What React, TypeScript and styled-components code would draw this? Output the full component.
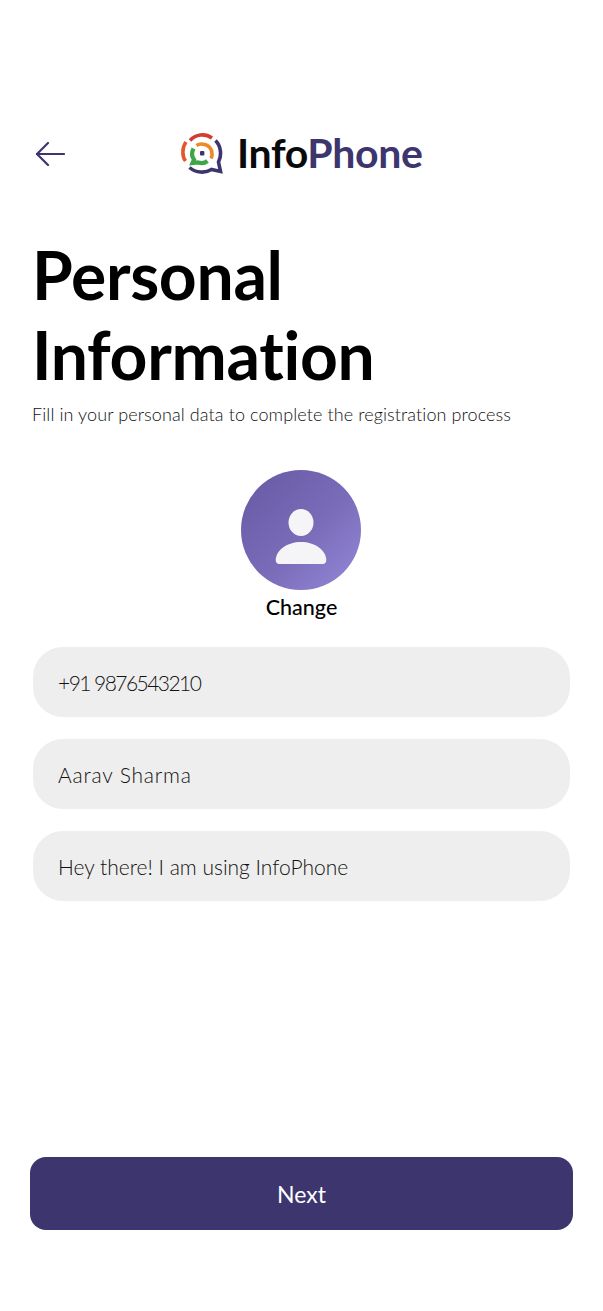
import styled, { createGlobalStyle } from "styled-components";

const GlobalStyle = createGlobalStyle`
  html, body {
    margin: 0;
    padding: 0;
    background: #ffffff;
  }
  * {
    box-sizing: border-box;
  }
`;

const Screen = styled.div`
  width: 603px;
  height: 1311px;
  display: flex;
  flex-direction: column;
  padding: 132px 30px 81px;
  font-family: Lato, "Noto Sans", sans-serif;
  color: #000;
  overflow: hidden;
`;

const Header = styled.header`
  display: flex;
  align-items: center;
  height: 42px;
  padding-left: 5px;
`;

const BackButton = styled.button`
  display: flex;
  padding: 0;
  border: 0;
  background: none;
`;

const Brand = styled.div`
  display: flex;
  align-items: center;
  gap: 14px;
  margin-left: 116px;
`;

const BrandName = styled.div`
  font-size: 41px;
  font-weight: 700;
  letter-spacing: -0.35px;
  line-height: 42px;
  color: #0a0a0a;
  span {
    color: #3c356e;
  }
`;

const Title = styled.h1`
  margin: 61px 0 0 2px;
  font-size: 66px;
  line-height: 80px;
  font-weight: 700;
  letter-spacing: -0.3px;
`;

const Subtitle = styled.p`
  margin: 7px 0 0 2px;
  font-size: 18px;
  line-height: 24px;
  font-weight: 300;
  letter-spacing: 0.1px;
  white-space: nowrap;
  color: #111;
`;

const ProfileBlock = styled.div`
  display: flex;
  flex-direction: column;
  align-items: center;
  margin-top: 44px;
`;

const Avatar = styled.div`
  width: 120px;
  height: 120px;
  margin-right: 1px;
  border-radius: 50%;
  display: flex;
  align-items: center;
  justify-content: center;
  padding-top: 13px;
  background: linear-gradient(135deg, #6b5ca8 10%, #7a6cb8 55%, #8f82d2 90%);
`;

const ChangeLabel = styled.div`
  margin-top: 4px;
  font-size: 21.5px;
  line-height: 26px;
  font-weight: 500;
`;

const Fields = styled.div`
  display: flex;
  flex-direction: column;
  gap: 22px;
  margin: 27px 3px 0;
`;

const Field = styled.div<{ $spacing?: number }>`
  height: 70px;
  border-radius: 30px;
  display: flex;
  align-items: center;
  padding: 0 25px;
  background: #eeeeee;
  font-size: 21px;
  font-weight: 300;
  letter-spacing: ${(props) => props.$spacing ?? 0}px;
  color: #111;
`;

const NextButton = styled.button`
  margin-top: auto;
  height: 73px;
  border: 0;
  border-radius: 16px;
  background: #3c356e;
  color: #fff;
  font-family: inherit;
  font-size: 23px;
  font-weight: 400;
`;

function BackArrow() {
  return (
    <svg width="30" height="26" viewBox="0 -1 30 26" fill="none" stroke="#3c356e" strokeWidth="2.2" strokeLinecap="round" strokeLinejoin="round">
      <path d="M29 13H2" />
      <path d="M13 2 2 13l11 11" />
    </svg>
  );
}

// ring segments around a chat-bubble tail, inner arcs in orange and green
function LogoMark() {
  return (
    <svg width="42" height="42" viewBox="0 0 42 42" fill="none" strokeWidth="3.6">
      <path d="M9 8.500C14.500 2.200 24 1 31 6" stroke="#cf3f2e" />
      <path d="M5 10C1 15.500.9 24 4.500 29" stroke="#e2582a" />
      <path d="M34.500 8.500C40 14 41 23 37.500 30L39.500 39.500 30.500 37.500C24 41.500 15 41 8.500 35.500" stroke="#3c356e" />
      <path d="M15.500 13.500C20 10.500 28 12 30.500 18.500 31.400 21.500 31 24.500 30 26.500" stroke="#ec8a2a" />
      <path d="M12.500 16.500C10.500 20.500 11 25 13 27.500L11.500 31 17 30.500C20.500 31.500 24 31 26.500 29" stroke="#3fa648" strokeWidth="4.200" />
      <rect x="19" y="19" width="4.400" height="4.400" rx="1" fill="#3c356e" />
    </svg>
  );
}

function PersonIcon() {
  return (
    <svg width="52" height="56" viewBox="0 0 52 56" fill="#f5f5f7">
      <ellipse cx="26" cy="13.500" rx="12.500" ry="13.500" />
      <path d="M26 33C12 33 1.500 41 .7 50.500c-.2 2.800 1.300 4.500 3.500 4.500h43.600c2.200 0 3.700-1.700 3.500-4.500C50.500 41 40 33 26 33Z" />
    </svg>
  );
}

export default function App() {
  return (
    <Screen>
      <GlobalStyle />
      <Header>
        <BackButton>
          <BackArrow />
        </BackButton>
        <Brand>
          <LogoMark />
          <BrandName>
            Info<span>Phone</span>
          </BrandName>
        </Brand>
      </Header>
      <Title>
        Personal
        <br />
        Information
      </Title>
      <Subtitle>Fill in your personal data to complete the registration process</Subtitle>
      <ProfileBlock>
        <Avatar>
          <PersonIcon />
        </Avatar>
        <ChangeLabel>Change</ChangeLabel>
      </ProfileBlock>
      <Fields>
        <Field $spacing={-1.55}>+91 9876543210</Field>
        <Field $spacing={0.8}>Aarav Sharma</Field>
        <Field>Hey there! I am using InfoPhone</Field>
      </Fields>
      <NextButton>Next</NextButton>
    </Screen>
  );
}
